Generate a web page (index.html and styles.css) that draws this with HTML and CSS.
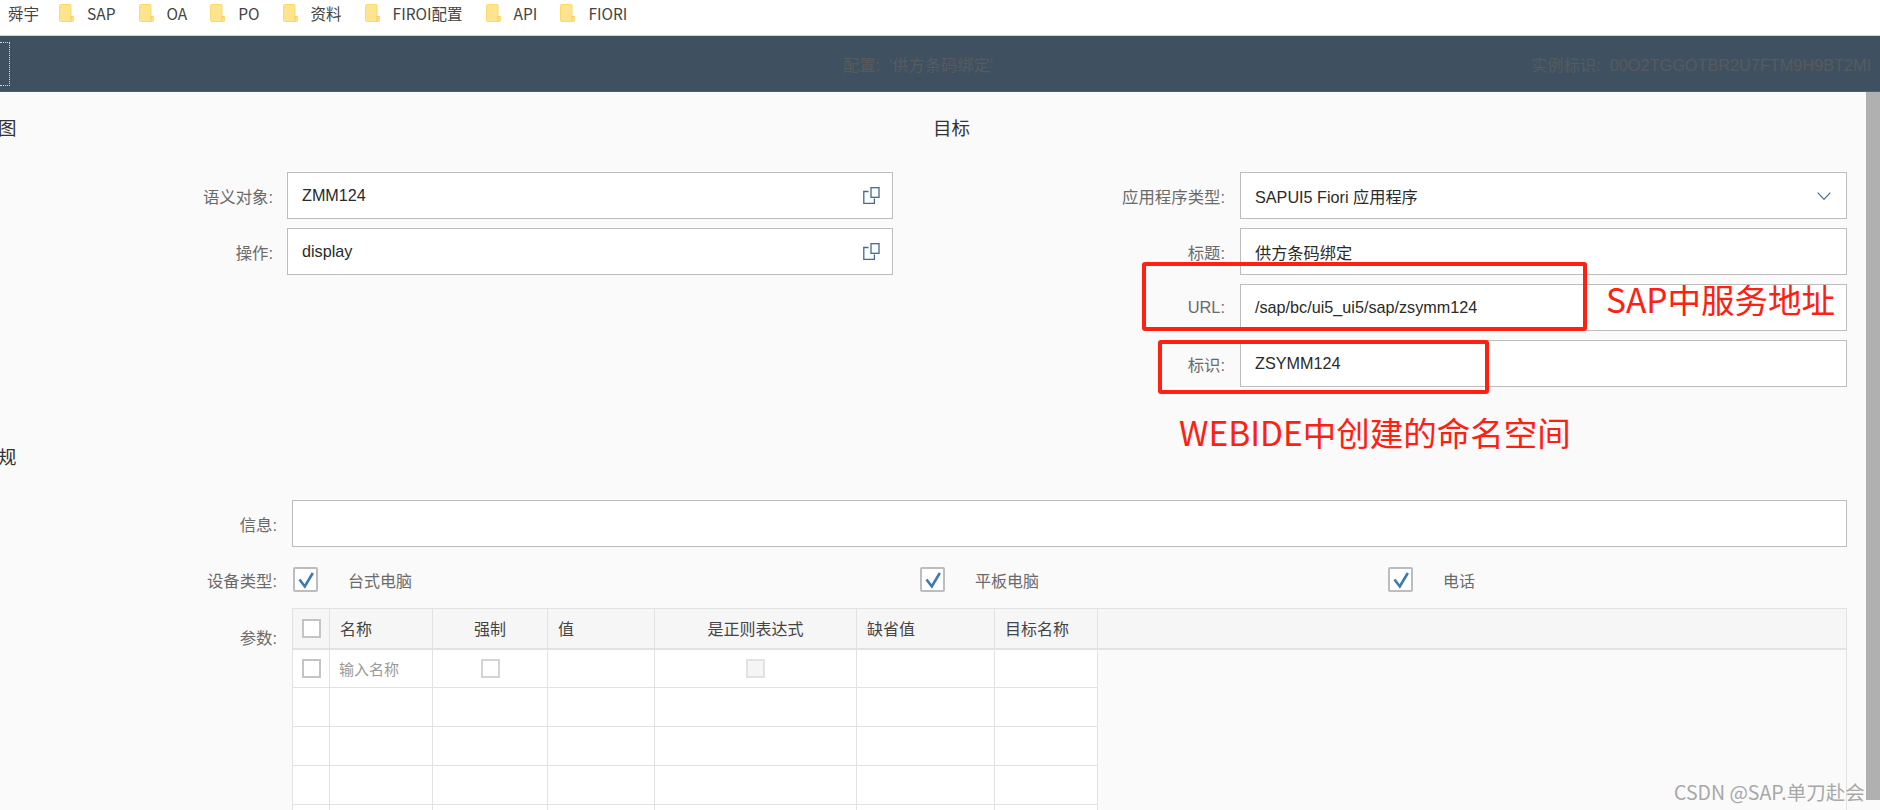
FILE: index.html
```html
<!DOCTYPE html>
<html lang="zh-CN">
<head>
<meta charset="utf-8">
<title>配置</title>
<link rel="stylesheet" href="styles.css">
</head>
<body>
<svg class="defs" width="0" height="0" aria-hidden="true">
  <symbol id="folder" viewBox="0 0 15 18">
    <path d="M1.500.5h9.500q1 0 1 1v11h1.500q1 0 1 1v3q0 1-1 1h-12q-1 0-1-1v-15q0-1 1-1z" fill="#ffe48f" stroke="#fbd96b"/>
    <path d="M12 17v-4.500h2.500" fill="none" stroke="#f5cd58"/>
  </symbol>
  <symbol id="copy" viewBox="0 0 17 17">
    <path d="M5.500 4.500H.8v12h10.600v-5" fill="none" stroke="#3f6b96" stroke-width="1.300"/>
    <rect x="8" y=".7" width="8" height="9.600" fill="none" stroke="#3f6b96" stroke-width="1.300"/>
  </symbol>
  <symbol id="tick" viewBox="0 0 21 21">
    <path d="M4.500 10.500L9.800 17.500 17.800 4" fill="none" stroke="#3c7ab0" stroke-width="2.600"/>
  </symbol>
</svg>

<nav class="bookmarks">
  <span class="mark mark-first">舜宇</span>
  <span class="mark"><svg class="folder"><use href="#folder"/></svg>SAP</span>
  <span class="mark"><svg class="folder"><use href="#folder"/></svg>OA</span>
  <span class="mark"><svg class="folder"><use href="#folder"/></svg>PO</span>
  <span class="mark"><svg class="folder"><use href="#folder"/></svg>资料</span>
  <span class="mark"><svg class="folder"><use href="#folder"/></svg>FIROI配置</span>
  <span class="mark"><svg class="folder"><use href="#folder"/></svg>API</span>
  <span class="mark"><svg class="folder"><use href="#folder"/></svg>FIORI</span>
</nav>

<header class="shell">
  <div class="focus-box"></div>
  <div class="shell-title">配置:  '供方条码绑定'</div>
  <div class="shell-id">实例标识:  00O2TGGOTBR2U7FTM9H9BT2MI</div>
</header>

<div class="main">
  <main class="content">
    <div class="columns">
      <section class="col-left">
        <h2 class="title title-clipped">图</h2>
        <div class="form">
          <div class="row row-left">
            <label class="label">语义对象:</label>
            <div class="input"><span>ZMM124</span><svg class="copy"><use href="#copy"/></svg></div>
          </div>
          <div class="row row-left">
            <label class="label">操作:</label>
            <div class="input"><span>display</span><svg class="copy"><use href="#copy"/></svg></div>
          </div>
        </div>
      </section>
      <section class="col-right">
        <h2 class="title">目标</h2>
        <div class="form">
          <div class="row row-right">
            <label class="label">应用程序类型:</label>
            <div class="input"><span>SAPUI5 Fiori 应用程序</span>
              <svg class="chevron" viewBox="0 0 14 8"><path d="M.7.7L7 7.300 13.300.7" fill="none" stroke="#3f6b96" stroke-width="1.200"/></svg>
            </div>
          </div>
          <div class="row row-right">
            <label class="label">标题:</label>
            <div class="input"><span>供方条码绑定</span></div>
          </div>
          <div class="row row-right">
            <label class="label">URL:</label>
            <div class="input"><span>/sap/bc/ui5_ui5/sap/zsymm124</span></div>
          </div>
          <div class="row row-right">
            <label class="label">标识:</label>
            <div class="input"><span>ZSYMM124</span></div>
          </div>
        </div>
      </section>
    </div>

    <section class="general">
      <h2 class="title title-clipped">规</h2>
      <div class="row-wide info-row">
        <label class="label">信息:</label>
        <div class="input"></div>
      </div>
      <div class="row-wide device-row">
        <label class="label">设备类型:</label>
        <div class="devices">
          <span class="device device-a"><span class="check"><svg class="tick"><use href="#tick"/></svg></span>台式电脑</span>
          <span class="device device-b"><span class="check"><svg class="tick"><use href="#tick"/></svg></span>平板电脑</span>
          <span class="device"><span class="check"><svg class="tick"><use href="#tick"/></svg></span>电话</span>
        </div>
      </div>
      <div class="row-wide params-row">
        <label class="label params-label">参数:</label>
        <table class="params">
          <colgroup>
            <col class="c-sel"><col class="c-name"><col class="c-req"><col class="c-val"><col class="c-re"><col class="c-def"><col class="c-tgt"><col>
          </colgroup>
          <thead>
            <tr>
              <th><span class="box"></span></th>
              <th class="left">名称</th>
              <th>强制</th>
              <th class="left">值</th>
              <th>是正则表达式</th>
              <th class="left">缺省值</th>
              <th class="left">目标名称</th>
              <th></th>
            </tr>
          </thead>
          <tbody>
            <tr>
              <td class="center"><span class="box"></span></td>
              <td class="placeholder">输入名称</td>
              <td class="center"><span class="box box-light"></span></td>
              <td></td>
              <td class="center"><span class="box box-off"></span></td>
              <td></td>
              <td></td>
              <td class="filler" rowspan="5"></td>
            </tr>
            <tr><td></td><td></td><td></td><td></td><td></td><td></td><td></td></tr>
            <tr><td></td><td></td><td></td><td></td><td></td><td></td><td></td></tr>
            <tr><td></td><td></td><td></td><td></td><td></td><td></td><td></td></tr>
            <tr><td></td><td></td><td></td><td></td><td></td><td></td><td></td></tr>
          </tbody>
        </table>
      </div>
    </section>
  </main>
</div>
<div class="scrollbar"></div>

<div class="callout callout-url"></div>
<div class="callout callout-id"></div>
<div class="note note-url">SAP中服务地址</div>
<div class="note note-id">WEBIDE中创建的命名空间</div>
<div class="watermark">CSDN @SAP.单刀赴会</div>
</body>
</html>
```
FILE: styles.css
```css
* { box-sizing: border-box; }
html, body { margin: 0; height: 810px; overflow: hidden; }
body {
  position: relative;
  background: #fafafa;
  color: #333;
  font-family: "Liberation Sans", "Noto Sans CJK SC", sans-serif;
  font-size: 16px;
}
.defs { position: absolute; }

.bookmarks {
  display: flex;
  align-items: center;
  height: 36px;
  padding: 0 0 9px 8px;
  background: #fff;
  border-bottom: 1px solid #d3d6d9;
  font-family: "Noto Sans CJK SC", "Noto Sans", sans-serif;
  font-size: 15.500px;
  color: #444;
}
.mark { display: flex; align-items: center; margin-right: 23px; }
.mark-first { margin-right: 20px; }
.folder { width: 15px; height: 18px; margin-right: 13px; }

.shell {
  display: flex;
  align-items: center;
  height: 56px;
  background: #3f5161;
  border-bottom: 1px solid #4d6072;
  color: #585a5c;
  font-size: 16.300px;
  white-space: pre;
}
.focus-box {
  width: 10px;
  height: 44px;
  margin-right: 833px;
  border: 1px dotted #d8dde2;
  border-left: 0;
}
.shell-title { width: 688px; }
.shell-id { white-space: pre; }

.main { height: 718px; padding-right: 14px; }
.content { height: 718px; overflow: hidden; padding-top: 25px; padding-right: 19px; }
.scrollbar { position: absolute; top: 92px; right: 0; width: 14px; height: 708px; background: #b0b0b0; }

.columns { display: grid; grid-template-columns: 933px 1fr; height: 296px; }
.title { margin: 0; height: 24px; font-size: 18.500px; font-weight: 400; line-height: 24px; color: #333; }
.title-clipped { margin-left: -2px; }
.form { display: flex; flex-direction: column; gap: 9px; margin-top: 31px; }

.row { display: grid; align-items: center; column-gap: 14px; }
.row-left { grid-template-columns: 273px 606px; }
.row-right { grid-template-columns: 292px 607px; column-gap: 15px; }
.label { text-align: right; color: #6a6a6a; font-size: 16.400px; white-space: nowrap; }

.input {
  display: flex;
  align-items: center;
  justify-content: space-between;
  height: 47px;
  padding: 0 14px;
  background: #fff;
  border: 1px solid #bdbdbd;
  font-size: 16.200px;
  color: #2a2a2a;
}
.copy { width: 17px; height: 17px; margin-right: -2px; }
.chevron { width: 14px; height: 8px; margin-right: 1px; }

.general { padding-top: 33px; }
.row-wide { display: grid; grid-template-columns: 277px 1fr; column-gap: 15px; }
.info-row { align-items: center; margin-top: 30px; }
.device-row { align-items: center; margin-top: 20px; height: 25px; }
.devices { display: flex; align-items: center; margin-left: 1px; color: #6a6a6a; }
.device { display: flex; align-items: center; gap: 30px; font-size: 16px; }
.device-a { width: 627px; }
.device-b { width: 468px; }
.check {
  display: block;
  width: 25px;
  height: 25px;
  background: #fff;
  border: 2px solid #bdbdbd;
  border-radius: 2px;
}
.tick { display: block; width: 21px; height: 21px; }

.params-row { margin-top: 16px; }
.params-label { padding-top: 17px; }
.params {
  width: 1555px;
  table-layout: fixed;
  border-collapse: collapse;
  border: 1px solid #e2e2e2;
  font-size: 16px;
}
.c-sel { width: 37px; }
.c-name { width: 103px; }
.c-req { width: 115px; }
.c-val { width: 107px; }
.c-re { width: 202px; }
.c-def { width: 138px; }
.c-tgt { width: 103px; }
.params th {
  height: 40px;
  padding: 0;
  background: #f6f6f6;
  border-right: 1px solid #e2e2e2;
  border-bottom: 2px solid #e2e2e2;
  font-weight: 400;
  color: #444;
}
.params th.left { text-align: left; padding-left: 10px; }
.params td {
  height: 39px;
  padding: 0;
  background: #fff;
  border-right: 1px solid #e2e2e2;
  border-bottom: 1px solid #e2e2e2;
}
.params td.center { text-align: center; }
.params td.placeholder { padding-left: 9px; color: #999; font-size: 15px; }
.params td.filler { background: #fafafa; border-bottom: 0; }
.box {
  display: inline-block;
  width: 19px;
  height: 19px;
  vertical-align: middle;
  background: #fff;
  border: 2px solid #c4c4c4;
}
.box-light { border-color: #d4d4d4; }
.box-off { background: #f5f5f5; border-color: #e2e2e2; }

.callout { position: absolute; border: 4px solid #ff2012; border-radius: 3px; }
.callout-url { left: 1142px; top: 262px; width: 445px; height: 69px; }
.callout-id { left: 1158px; top: 340px; width: 331px; height: 54px; }
.note {
  position: absolute;
  color: #ff2012;
  font-family: "Noto Sans CJK SC", sans-serif;
  font-size: 33.500px;
  line-height: 40px;
  white-space: nowrap;
}
.note-url { left: 1606px; top: 279px; }
.note-id { left: 1179px; top: 412px; }
.watermark {
  position: absolute;
  left: 1674px;
  top: 780px;
  color: #a8a8a8;
  font-family: "Noto Sans CJK SC", sans-serif;
  font-size: 19.500px;
  line-height: 24px;
  white-space: nowrap;
}
```
